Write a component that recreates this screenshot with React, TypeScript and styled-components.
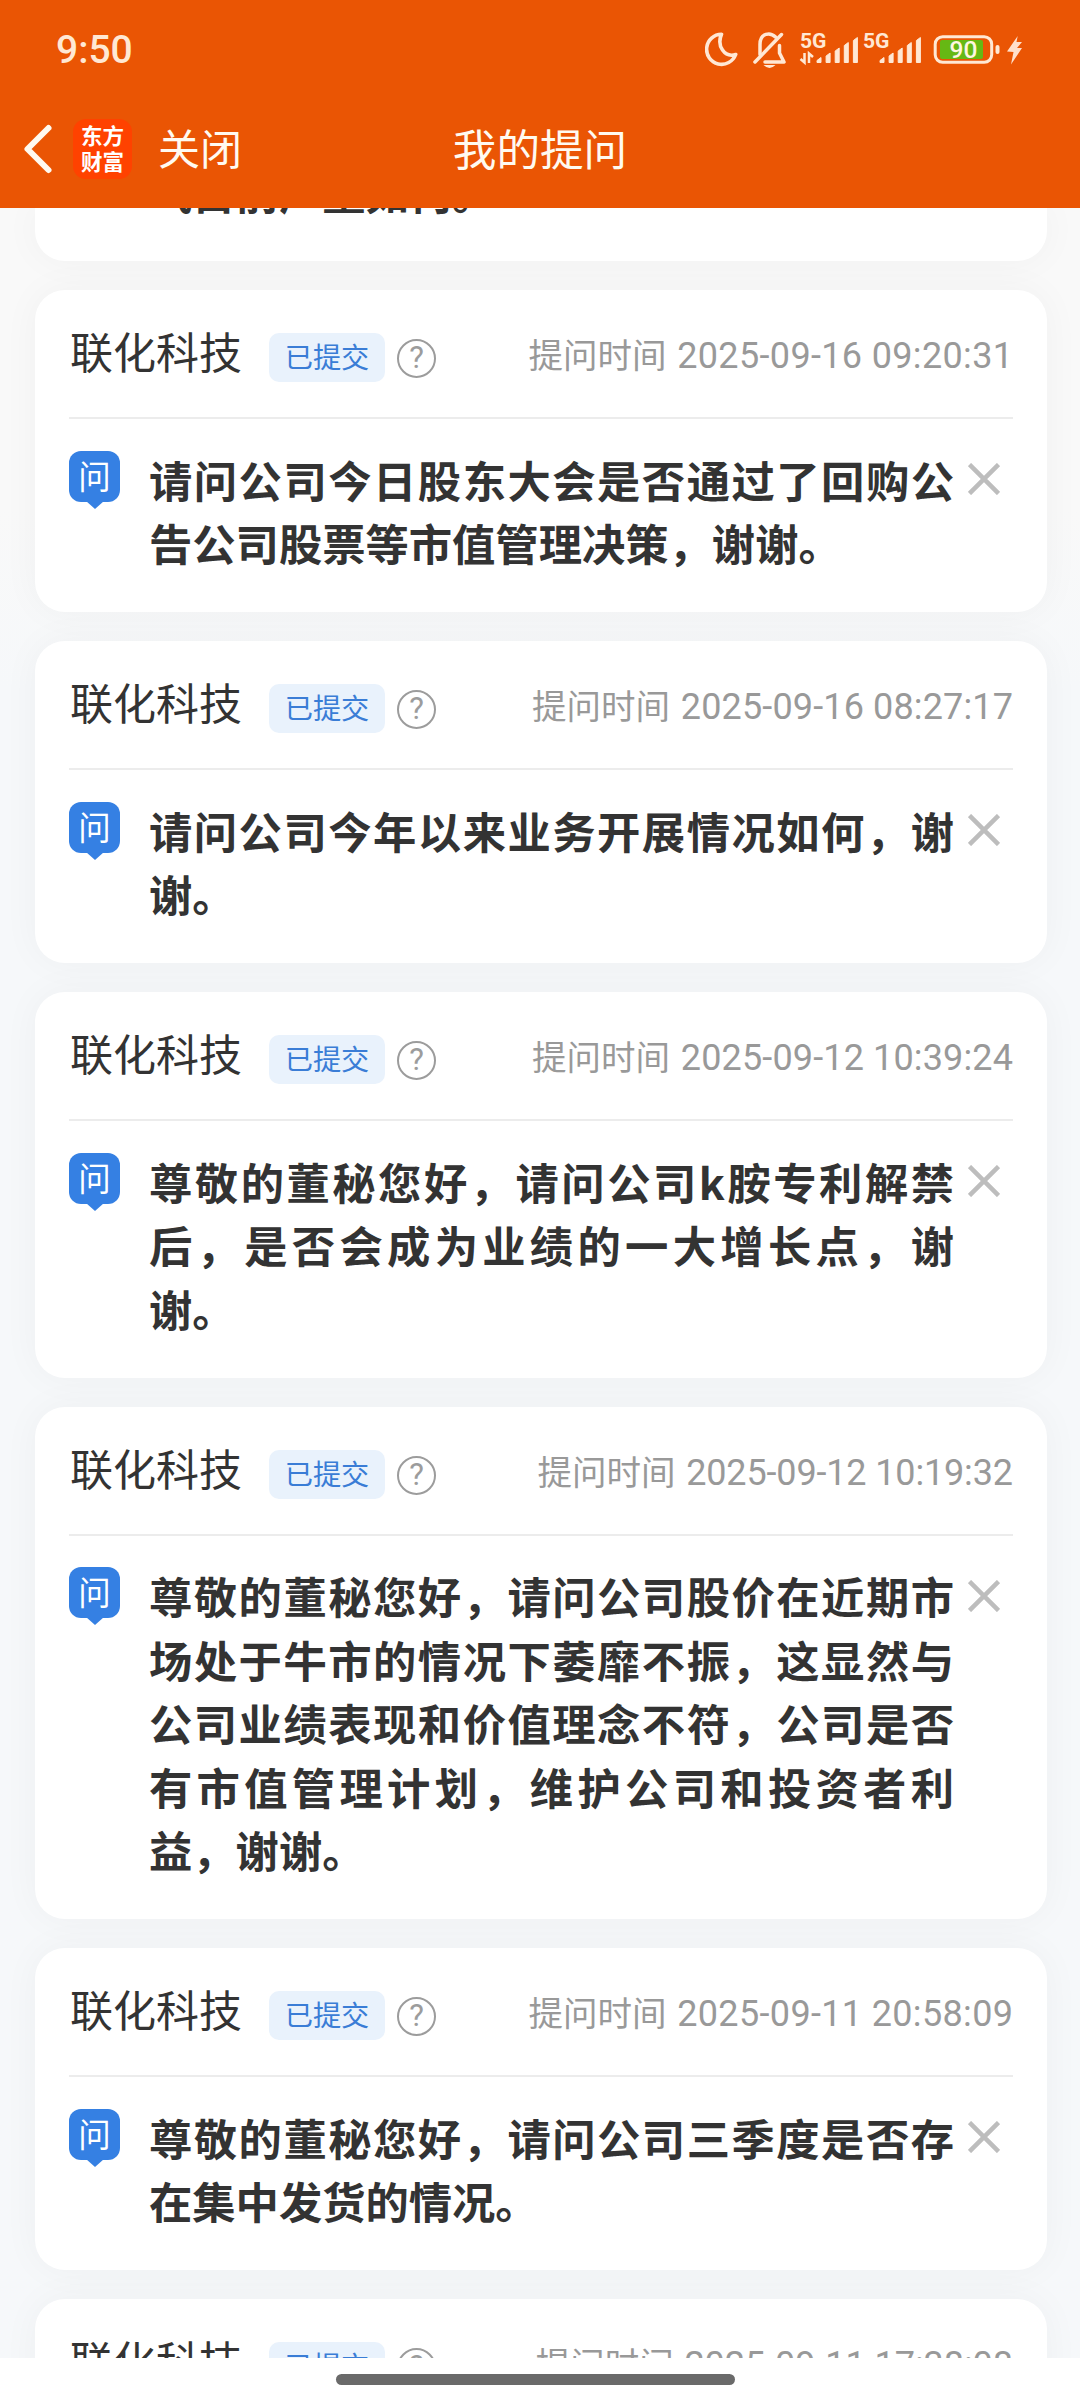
import React from 'react';
import styled, { createGlobalStyle } from 'styled-components';

const cjk = '"Noto Sans CJK SC", sans-serif';
const latin = 'Roboto, "Noto Sans CJK SC", sans-serif';

const GlobalStyle = createGlobalStyle`
  * { box-sizing: border-box; }
  body { margin: 0; background: #fff; }
`;

const Screen = styled.div`
  width: 1080px;
  height: 2400px;
  display: flex;
  flex-direction: column;
  overflow: hidden;
  font-family: ${cjk};
`;

const Header = styled.header`
  flex: none;
  height: 208px;
  background: #ea5504;
  color: #fffaf0;
`;

const StatusBar = styled.div`
  height: 100px;
  padding: 0 39px 0 56px;
  display: flex;
  justify-content: space-between;
  align-items: center;
`;

const Clock = styled.span`
  font: 500 39px/1 ${latin};
  color: #ffe8d4;
`;

const NavBar = styled.div`
  height: 98px;
  display: grid;
  grid-template-columns: 1fr auto 1fr;
  align-items: center;
`;

const NavLeft = styled.div`
  display: flex;
  align-items: center;
  padding-left: 22px;
`;

const AppLogo = styled.div`
  width: 59px;
  height: 60px;
  margin-left: 19px;
  border-radius: 13px;
  background: #ff4200;
  color: #fff;
  display: flex;
  flex-direction: column;
  align-items: center;
  justify-content: center;
  padding-bottom: 2px;
  font-size: 21.5px;
  line-height: 26px;
  font-weight: 700;
`;

const CloseLabel = styled.span`
  margin: 0 0 5px 26px;
  font-size: 42px;
  line-height: 60px;
`;

const Title = styled.h1`
  margin: 0 0 5px;
  font-size: 43.6px;
  line-height: 60px;
  font-weight: 400;
`;

const List = styled.main`
  flex: none;
  height: 2150px;
  overflow: hidden;
  display: flex;
  flex-direction: column;
  justify-content: flex-start;
  gap: 29px;
  padding: 0 33px 0 35px;
  background: linear-gradient(#f9f9f9 0, #f9f9f9 300px, #f6f8fa 480px);
`;

const Card = styled.article<{ $tail?: boolean }>`
  flex: none;
  padding: ${p => (p.$tail ? '0 34px 37.5px' : '34px 34px 37.5px')};
  border-radius: ${p => (p.$tail ? '0 0 30px 30px' : '30px')};
  height: ${p => (p.$tail ? '53px' : 'auto')};
  background: #fff;
  box-shadow: 0 0 38px rgba(0, 0, 0, 0.04);
  display: flex;
  flex-direction: column;
  justify-content: ${p => (p.$tail ? 'flex-end' : 'flex-start')};
`;

const CardHead = styled.div`
  height: 95px;
  border-bottom: 2px solid #ececec;
  display: flex;
  align-items: flex-start;
`;

const Company = styled.span`
  margin: -4px 0 0 1px;
  width: 173px;
  font-size: 43px;
  line-height: 60px;
  color: #333;
  white-space: nowrap;
`;

const Badge = styled.span`
  margin: 9px 0 0 26px;
  width: 116px;
  height: 49px;
  border-radius: 10px;
  background: #e9f2fc;
  color: #3a7dd6;
  font-size: 28.2px;
  line-height: 45px;
  text-align: center;
`;

const Help = styled.span`
  margin: 15px 0 0 12px;
  width: 39px;
  height: 39px;
  border: 2px solid #9c9c9c;
  border-radius: 50%;
  color: #9c9c9c;
  font: 400 31px/34px ${latin};
  text-align: center;
`;

const Time = styled.span<{ $track: number }>`
  margin: 5px 0 0 auto;
  color: #999;
  font-size: 34.5px;
  line-height: 48px;
  white-space: nowrap;
  time {
    font: 400 36px/48px ${latin};
    letter-spacing: ${p => p.$track}px;
    margin: 0 ${p => -p.$track}px 0 3px;
  }
`;

const CardBody = styled.div`
  display: flex;
  align-items: flex-start;
  padding-top: 31px;
`;

const AskMark = styled.span`
  position: relative;
  flex: none;
  width: 51px;
  height: 51px;
  margin-top: 0.5px;
  border-radius: 12px;
  background: #3580e3;
  color: #fff;
  font-size: 32.5px;
  line-height: 48px;
  text-align: center;
  font-weight: 400;
  &::after {
    content: '';
    position: absolute;
    left: 17px;
    top: 50px;
    border: solid transparent;
    border-width: 8px 9px 0;
    border-top-color: #3580e3;
  }
`;

const Question = styled.p`
  flex: none;
  width: 805px;
  margin: -2.5px 0 0 29px;
  color: #333;
  font-size: 43.3px;
  line-height: 63.5px;
  font-weight: 700;
  text-align: justify;
`;

const TailQuestion = styled(Question)`
  margin-left: 80px;
`;

const Remove = styled.svg`
  flex: none;
  margin: 13px 0 0 14px;
`;

const HomeBar = styled.footer`
  flex: 1;
  background: #fff;
  display: flex;
  justify-content: center;
  padding-top: 16px;
`;

const HomePill = styled.span`
  width: 399px;
  height: 11px;
  margin-right: 9px;
  border-radius: 6px;
  background: #6a6a6a;
`;

const items = [
  { time: '2025-09-16 09:20:31', track: 0.35, text: '请问公司今日股东大会是否通过了回购公告公司股票等市值管理决策，谢谢。' },
  { time: '2025-09-16 08:27:17', track: 0.15, text: '请问公司今年以来业务开展情况如何，谢谢。' },
  { time: '2025-09-12 10:39:24', track: 0.15, text: '尊敬的董秘您好，请问公司k胺专利解禁后，是否会成为业绩的一大增长点，谢谢。' },
  { time: '2025-09-12 10:19:32', track: -0.15, text: '尊敬的董秘您好，请问公司股价在近期市场处于牛市的情况下萎靡不振，这显然与公司业绩表现和价值理念不符，公司是否有市值管理计划，维护公司和投资者利益，谢谢。' },
  { time: '2025-09-11 20:58:09', track: 0.35, text: '尊敬的董秘您好，请问公司三季度是否存在集中发货的情况。' },
  { time: '2025-09-11 17:38:08', track: -0.05, text: '尊敬的董秘您好，请问公司近期经营情况。' },
];

const bars = (x: number) =>
  [5, 9.5, 14.5, 20, 25].map((h, i) => (
    <path key={i} d={`M${x + i * 9.1} 42.5v${-h + 3}l4 -3v${h}z`} strokeWidth="1" strokeLinejoin="round" fill="#ffe8d4" />
  ));

function StatusIcons() {
  return (
    <svg width="336" height="60" viewBox="0 0 336 60" fill="none" stroke="#ffe8d4">
      <path d="M16.500 14.300A15 15 0 1 0 30.700 34.500C19.500 38 11.500 26 16.500 14.300Z" strokeWidth="3.600" strokeLinejoin="round" />
      <g strokeWidth="3.500" strokeLinecap="round" strokeLinejoin="round">
        <path d="M55 34.500V24.500C55 12.500 65.500 12 70.500 17M74.500 25.500V33L79 42H60" />
        <path d="M76.500 14.500L50 42" />
      </g>
      <path d="M58.500 45H70.500Q64.500 51 58.500 45Z" fill="#ffe8d4" stroke="none" />
      <g fill="#ffe8d4" stroke="none" fontFamily="Roboto" fontWeight="700" fontSize="20.500">
        <text x="95" y="28" textLength="26.500" lengthAdjust="spacingAndGlyphs">5G</text>
        <text x="158" y="28" textLength="26.500" lengthAdjust="spacingAndGlyphs">5G</text>
      </g>
      <path d="M99.500 33V42.500L95.500 39M104 43V33.500L108 37" strokeWidth="2.500" />
      {bars(112)}
      {bars(175)}
      <rect x="230.200" y="16.700" width="56.500" height="25.600" rx="7.500" strokeWidth="3" />
      <rect x="235" y="20" width="43" height="19" rx="2" fill="#66b814" stroke="none" />
      <text x="244.500" y="38" fill="#fff6e0" stroke="none" fontFamily="Roboto" fontWeight="500" fontSize="24.500">90</text>
      <rect x="290.500" y="25" width="4" height="9" rx="2" fill="#ffe8d4" stroke="none" />
      <path d="M312.700 16L302 31.500L308.500 32L306 44.500L317 28H312L317 22H311.500Z" fill="#ffe0cc" stroke="none" />
    </svg>
  );
}

export default function App() {
  return (
    <Screen lang="zh-CN">
      <GlobalStyle />
      <Header>
        <StatusBar>
          <Clock>9:50</Clock>
          <StatusIcons />
        </StatusBar>
        <NavBar>
          <NavLeft>
            <svg width="32" height="52" viewBox="0 0 32 52" fill="none" stroke="#fffaf0" strokeWidth="6" strokeLinecap="round" strokeLinejoin="round">
              <path d="M26.500 5L5.500 26L26.500 47" />
            </svg>
            <AppLogo>
              <span>东方</span>
              <span>财富</span>
            </AppLogo>
            <CloseLabel>关闭</CloseLabel>
          </NavLeft>
          <Title>我的提问</Title>
        </NavBar>
      </Header>
      <List>
        <Card $tail>
          <TailQuestion>气目前产量如何。</TailQuestion>
        </Card>
        {items.map(item => (
          <Card key={item.time}>
            <CardHead>
              <Company>联化科技</Company>
              <Badge>已提交</Badge>
              <Help>?</Help>
              <Time $track={item.track}>
                提问时间 <time>{item.time}</time>
              </Time>
            </CardHead>
            <CardBody>
              <AskMark>问</AskMark>
              <Question>{item.text}</Question>
              <Remove width="32" height="32" viewBox="0 0 32 32" stroke="#bdbdbd" strokeWidth="4.500">
                <path d="M1.500 1.500L30.500 30.500M30.500 1.500L1.500 30.500" />
              </Remove>
            </CardBody>
          </Card>
        ))}
      </List>
      <HomeBar>
        <HomePill />
      </HomeBar>
    </Screen>
  );
}
